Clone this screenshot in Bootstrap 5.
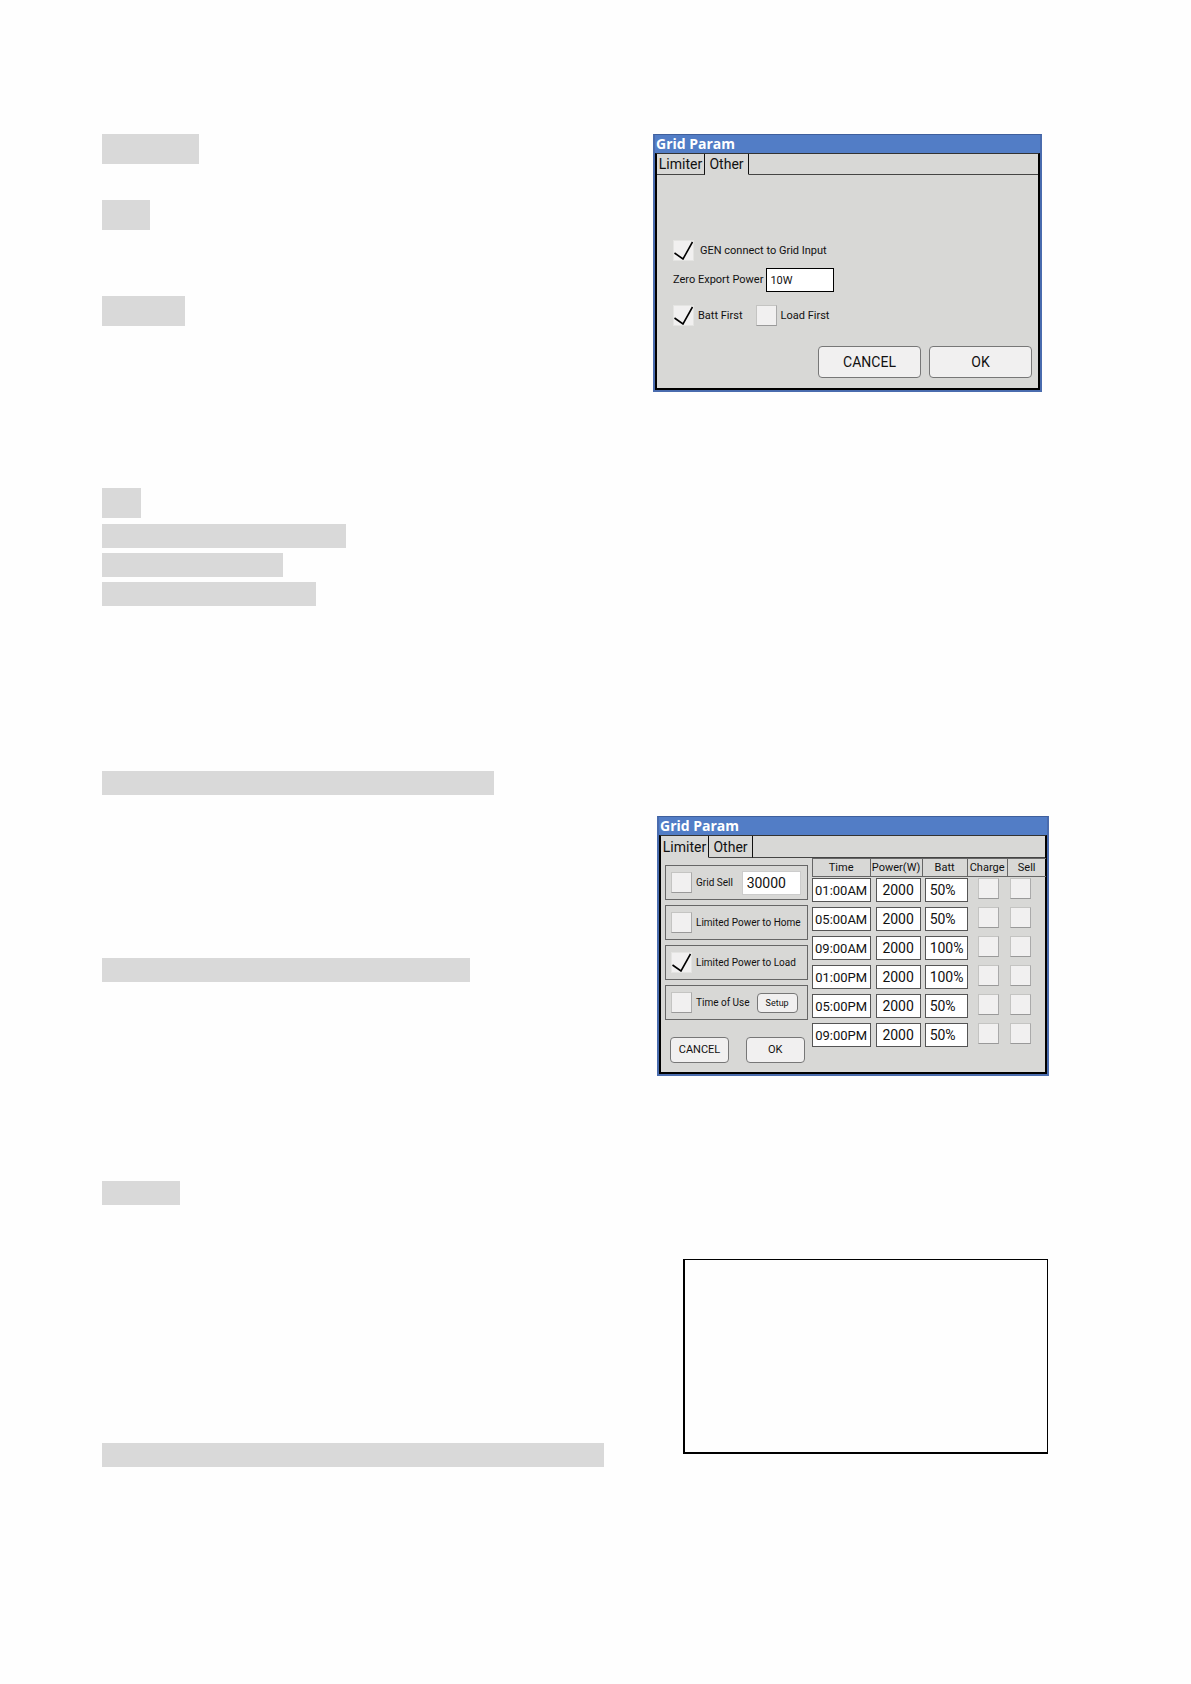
<!DOCTYPE html>
<html lang="en">
<head>
<meta charset="utf-8">
<meta name="viewport" content="width=device-width, initial-scale=1">
<title>Grid Param</title>
<link href="https://cdn.jsdelivr.net/npm/bootstrap@5.3.0/dist/css/bootstrap.min.css" rel="stylesheet">
<style>
body{background:#fefefe;color:#111;font-family:Roboto,"Open Sans",sans-serif;font-size:11px;line-height:16px}
.sheet{padding:134px 142px 0 102px}
.figures{width:396px}
/* highlighted headings */
.hl{background:#d9d9d9;height:24px;max-width:100%}
.hl-lg{height:30px}
/* device screens */
.screen{border:2px solid #4a6cae;border-top:1px solid #3f5f9c}
.screen-a{width:389px}
.screen-b{width:392px;margin-top:424px}
.screen-title{background:#527dc6;color:#fff;font:700 14px/18px "Open Sans",sans-serif;padding-left:1px;margin:0}
.screen-in{background:#d8d8d6;border:2px solid #000;border-top:1px solid #333}
.tabs{height:21px}
.screen-b .tabs{height:22px}
.tab-btn{border:0;border-right:1px solid #111;border-bottom:1px solid #444;background:none;padding:0;font-size:14px;line-height:20px;color:#111}
.tab-btn.active{border-bottom-color:transparent}
.tab-w1{width:48px}.tab-w2{width:44px}
.tab-rest{border-bottom:1px solid #444}
.tick{appearance:none;flex:none;width:21px;height:21px;margin:0;background:#f1f0f0;border:1px solid #c4c4c2;border-right-color:#aaa;border-bottom-color:#999;display:block}
.tick:checked{border-color:#e4e4e2;background:#f1f0f0 url("data:image/svg+xml,%3Csvg xmlns='http://www.w3.org/2000/svg' viewBox='0 0 19 19'%3E%3Cpath d='M0.5 12 L9 18 L18.5 1' fill='none' stroke='%23000' stroke-width='1.6'/%3E%3C/svg%3E") center/19px 19px no-repeat}
.field{background:#fff;border:1px solid #555;border-radius:0;color:#111;padding:0 4px;height:24px;font-size:14px;display:block;min-width:0}
.field-zero{width:68px;border-color:#000;font-size:11px;padding-left:3px}
.field-sell{width:59px;border-color:#ccc}
.key{background:#f1f0f0;border:1px solid #777;border-radius:4px;color:#111;padding:0}
.key-lg{width:103px;height:32px;font-size:14px}
.key-md{width:59px;height:26px;font-size:11px}
.key-sm{width:41px;height:20px;font-size:9px;line-height:16px}
.body-a{padding:65px 6px 10px 16px}
.gen-row{gap:6px}
.zero-row{margin-top:7px;gap:3px}
.first-row{margin-top:13px;gap:4px}
.load-tick{margin-left:9px}
.keys-a{margin-top:20px}
.body-b{padding:0 0 9px 4px;gap:4px}
.limits{width:143px;padding-top:7px;gap:5px}
.limit{border:1px solid #666;height:35px;padding:0 6px 0 5px;gap:4px;font-size:10px}
.limit-use{padding-right:9px}
.pad-keys{margin-top:12px;padding:0 3px 0 5px}
.sched{table-layout:fixed;width:234px;border-collapse:separate;border-spacing:0}
.sched th{height:19px;line-height:17px;padding:0;font-weight:400;text-align:center;border:solid #666;border-width:1px 1px 1px 0}
.sched th:first-child{border-left-width:1px}
.sched th:last-child{border-right-width:0}
.sched td{height:29px;padding:1px 0 0;vertical-align:top}
.c-time{width:59px}.c-power{width:52px}.c-batt{width:45px}.c-charge{width:40px}.c-sell{width:38px}
.sched .field{width:100%}
.sched .f-time{padding:0;font-size:13px;text-align:center}
.sched .f-num{width:45px;margin-left:5px;text-align:center;padding:0}
.sched .f-batt{width:43px;margin-left:2px;padding:0 0 0 4px}
.sched .t-charge{margin-left:10px}
.sched .t-sell{margin-left:2px}
.note-box{width:365px;height:195px;margin:183px 1px 0 0;border:solid #000;border-width:1px 1px 2px 2px}
</style>
<script src="https://cdn.jsdelivr.net/npm/bootstrap@5.3.0/dist/js/bootstrap.bundle.min.js"></script>
</head>
<body>
<main class="sheet d-flex">
  <div class="flex-grow-1" id="headings"></div>
  <div class="figures flex-shrink-0 d-flex flex-column">
    <section class="screen screen-a">
      <h2 class="screen-title">Grid Param</h2>
      <div class="screen-in">
        <div class="tabs d-flex">
          <button type="button" class="tab-btn tab-w1">Limiter</button><button type="button" class="tab-btn tab-w2 active">Other</button><div class="tab-rest flex-grow-1"></div>
        </div>
        <div class="body-a">
          <div class="d-flex align-items-center gen-row">
            <input class="tick" type="checkbox" id="gen" checked><label for="gen">GEN connect to Grid Input</label>
          </div>
          <div class="d-flex align-items-center zero-row">
            <label for="zero">Zero Export Power</label><input class="field field-zero" id="zero" value="10W">
          </div>
          <div class="d-flex align-items-center first-row">
            <input class="tick" type="checkbox" id="bf" checked><label for="bf">Batt First</label>
            <input class="tick load-tick" type="checkbox" id="lf"><label for="lf">Load First</label>
          </div>
          <div class="d-flex justify-content-end gap-2 keys-a">
            <button type="button" class="key key-lg">CANCEL</button><button type="button" class="key key-lg">OK</button>
          </div>
        </div>
      </div>
    </section>

    <section class="screen screen-b align-self-end">
      <h2 class="screen-title">Grid Param</h2>
      <div class="screen-in">
        <div class="tabs d-flex">
          <button type="button" class="tab-btn tab-w1 active">Limiter</button><button type="button" class="tab-btn tab-w2">Other</button><div class="tab-rest flex-grow-1"></div>
        </div>
        <div class="body-b d-flex align-items-start">
          <div class="limits d-flex flex-column">
            <div class="limit d-flex align-items-center"><input class="tick" type="checkbox" id="gs"><label class="text-nowrap" for="gs">Grid Sell</label><input class="field field-sell ms-auto" aria-label="Grid Sell power" value="30000"></div>
            <div class="limit d-flex align-items-center"><input class="tick" type="checkbox" id="lh"><label class="text-nowrap" for="lh">Limited Power to Home</label></div>
            <div class="limit d-flex align-items-center"><input class="tick" type="checkbox" id="ll" checked><label class="text-nowrap" for="ll">Limited Power to Load</label></div>
            <div class="limit limit-use d-flex align-items-center"><input class="tick" type="checkbox" id="tu"><label class="text-nowrap" for="tu">Time of Use</label><button type="button" class="key key-sm ms-auto">Setup</button></div>
            <div class="pad-keys d-flex justify-content-between"><button type="button" class="key key-md">CANCEL</button><button type="button" class="key key-md">OK</button></div>
          </div>
          <table class="sched">
            <colgroup><col class="c-time"><col class="c-power"><col class="c-batt"><col class="c-charge"><col class="c-sell"></colgroup>
            <thead><tr><th>Time</th><th>Power(W)</th><th>Batt</th><th>Charge</th><th>Sell</th></tr></thead>
            <tbody id="slots"></tbody>
          </table>
        </div>
      </div>
    </section>

    <div class="note-box align-self-end"></div>
  </div>
</main>
<script>
// [space above, width, tall]
const bars=[[0,97,1],[36,48,1],[66,83,1],[162,39,1],[6,244,0],[5,181,0],[5,214,0],[165,392,0],[163,368,0],[199,78,0],[238,502,0]];
document.getElementById('headings').innerHTML=bars.map(([t,w,l])=>
  `<div class="hl${l?' hl-lg':''}" style="margin-top:${t}px;width:${w}px"></div>`).join('');
const slots=[['01:00AM','50%'],['05:00AM','50%'],['09:00AM','100%'],['01:00PM','100%'],['05:00PM','50%'],['09:00PM','50%']];
document.getElementById('slots').innerHTML=slots.map(([t,b])=>
  `<tr><td><input class="field f-time" aria-label="Time" value="${t}"></td>
  <td><input class="field f-num" aria-label="Power" value="2000"></td>
  <td><input class="field f-batt" aria-label="Batt" value="${b}"></td>
  <td><input class="tick t-charge" type="checkbox" aria-label="Charge"></td>
  <td><input class="tick t-sell" type="checkbox" aria-label="Sell"></td></tr>`).join('');
</script>
</body>
</html>
